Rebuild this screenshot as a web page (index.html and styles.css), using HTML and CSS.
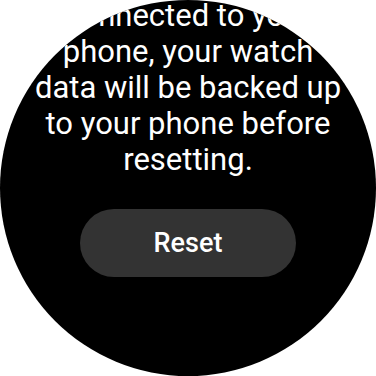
FILE: index.html
```html
<!DOCTYPE html>
<html>
<head>
<meta charset="utf-8">
<link rel="stylesheet" href="styles.css">
</head>
<body>
<div class="watch">
  <div class="content">
    <p class="message">connected to your<br>phone, your watch<br>data will be backed up<br>to your phone before<br>resetting.</p>
    <button class="reset">Reset</button>
  </div>
</div>
</body>
</html>
```
FILE: styles.css
```css
html, body {
  margin: 0;
  padding: 0;
  background: #ffffff;
}
.watch {
  width: 376px;
  height: 376px;
  border-radius: 50%;
  background: #000000;
  overflow: hidden;
  font-family: Roboto, "Noto Sans", sans-serif;
}
.content {
  display: flex;
  flex-direction: column;
  align-items: center;
  margin-top: -2px;
}
.message {
  margin: 0;
  color: #ffffff;
  font-size: 31px;
  line-height: 36px;
  text-align: center;
  white-space: nowrap;
}
.reset {
  margin-top: 31px;
  width: 216px;
  height: 68px;
  border: none;
  border-radius: 34px;
  background: #333333;
  color: #ffffff;
  font-family: Roboto, sans-serif;
  font-weight: 500;
  font-size: 27px;
  padding: 0;
}
```
